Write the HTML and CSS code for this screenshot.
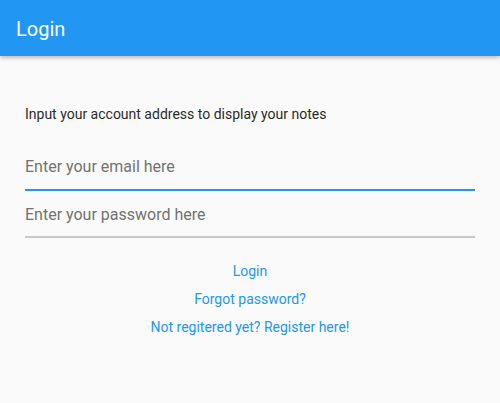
FILE: index.html
```html
<!DOCTYPE html>
<html>
<head>
<meta charset="utf-8">
<link rel="stylesheet" href="styles.css">
</head>
<body>
<header class="appbar"><span class="title">Login</span></header>
<main class="content">
  <p class="intro">Input your account address to display your notes</p>
  <div class="field focused"><span class="placeholder">Enter your email here</span></div>
  <div class="field"><span class="placeholder">Enter your password here</span></div>
  <div class="links">
    <a class="link">Login</a>
    <a class="link">Forgot password?</a>
    <a class="link">Not regitered yet? Register here!</a>
  </div>
</main>
</body>
</html>
```
FILE: styles.css
```css
html, body {
  margin: 0;
  padding: 0;
  background: #fafafa;
  font-family: Roboto, "Noto Sans", sans-serif;
  width: 500px;
  height: 403px;
  overflow: hidden;
}
.appbar {
  height: 56px;
  background: #2196f3;
  display: flex;
  align-items: center;
  padding-left: 16px;
  padding-top: 1px;
  box-sizing: border-box;
  box-shadow: 0 2px 4px rgba(0,0,0,0.25);
  position: relative;
}
.title {
  color: #fff;
  font-size: 20px;
  font-weight: 400;
}
.content {
  padding: 48px 25px 0 25px;
}
.intro {
  margin: 0;
  font-size: 14px;
  line-height: 20px;
  color: #2a2a2a;
}
.field {
  height: 47px;
  display: flex;
  align-items: center;
  border-bottom: 2px solid #c8c8c8;
  box-sizing: border-box;
  margin-top: 0;
}
.field.focused {
  height: 48px;
  margin-top: 19px;
  border-bottom: 2px solid #2196f3;
}
.placeholder {
  font-size: 16px;
  color: #727272;
  padding-top: 2px;
}
.field.focused .placeholder {
  padding-top: 0;
}
.links {
  display: flex;
  flex-direction: column;
  align-items: center;
  margin-top: 23px;
  gap: 8px;
}
.link {
  font-size: 14px;
  line-height: 20px;
  color: #2196f3;
}
```
